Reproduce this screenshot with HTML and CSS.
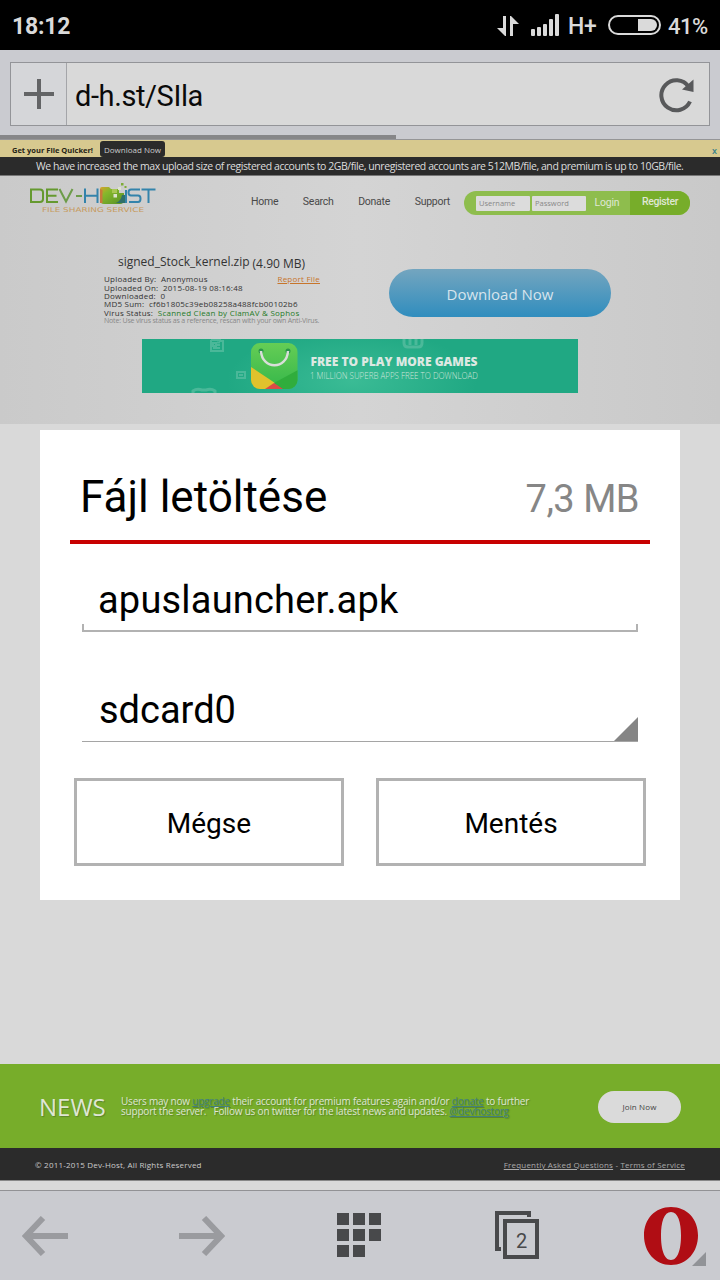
FILE: index.html
```html
<!DOCTYPE html>
<html lang="hu">
<head>
<meta charset="utf-8">
<title>d-h.st/SIla</title>
<link rel="stylesheet" href="styles.css">
</head>
<body>
<div class="phone">
  <header class="status">
    <span class="clock">18:12</span>
    <div class="status-right">
      <svg class="ic-data" width="22" height="22" viewBox="0 0 22 22"><path d="M6 1h3v20H8L0 13h6zM13 21h3V9h6L14 1h-1z" fill="#dadada"/></svg>
      <svg class="ic-signal" width="28" height="22" viewBox="0 0 28 22" fill="#dadada"><rect y="15" width="4" height="7" rx="1"/><rect x="6" y="13" width="4" height="9" rx="1"/><rect x="12" y="10" width="4" height="12" rx="1"/><rect x="18" y="5" width="4" height="17" rx="1"/><rect x="24" y="0" width="4" height="22" rx="1"/></svg>
      <span class="net">H+</span>
      <svg class="ic-battery" width="54" height="20" viewBox="0 0 54 20"><rect x="1" y="1" width="51" height="18" rx="9" fill="none" stroke="#dadada" stroke-width="2"/><path d="M30 4h13a6 6 0 0 1 0 12H30z" fill="#dadada"/></svg>
      <span class="pct">41%</span>
    </div>
  </header>

  <div class="address">
    <div class="urlbox">
      <div class="plus"><svg width="30" height="30" viewBox="0 0 30 30"><path d="M13 0h4v13h13v4H17v13h-4V17H0v-4h13z" fill="#636466"/></svg></div>
      <span class="url">d-h.st/SIla</span>
      <svg class="reload" width="36" height="36" viewBox="0 0 36 36"><path d="M31 24.500A15 15 0 1 1 29.500 9.500" fill="none" stroke="#58595b" stroke-width="4"/><path d="M34.500 2.500v12.500L23 12.500z" fill="#58595b"/></svg>
    </div>
  </div>
  <div class="progress"><div class="progress-bar"></div></div>

  <main class="site">
    <div class="promo"><b class="promo-text">Get your File Quicker!</b><span class="promo-btn">Download Now</span><span class="promo-x">x</span></div>
    <div class="notice"><span>We have increased the max upload size of registered accounts to 2GB/file, unregistered accounts are 512MB/file, and premium is up to 10GB/file.</span></div>
    <section class="hero">
      <div class="nav">
        <svg class="logo" width="130" height="36" viewBox="0 0 130 36">
          <defs>
            <linearGradient id="fold" x1="0" y1="0" x2="1" y2="1"><stop offset="0" stop-color="#d9a12a"/><stop offset=".3" stop-color="#86b82c"/><stop offset="1" stop-color="#568f26"/></linearGradient>
          </defs>
          <g fill="none" stroke-width="2">
            <path stroke="#65992f" d="M4 8.500h9q3 0 3 3v6.500q0 3-3 3H4zM31 8.500H20V21h11M20 14.800h9.500"/>
            <path stroke="#6d9c4a" d="M32.500 8l6.500 12.500L45.500 8M49 15h6"/>
            <path stroke="#3383ab" d="M58 7.500V22M70.500 7.500V22M58 14.800h12.500M99 9v13M113 8.500h-9q-2.500 0-2.500 3t2.500 3h7q2.500 0 2.500 3.200T111 21h-9M114.500 8.500H128.500M121.500 8.500V22"/>
          </g>
          <path d="M73 8q0-2 2-2h7l2 2h8v4h5v7q0 4-4 4H77q-4 0-4-4z" fill="url(#fold)"/>
          <path d="M73 8v14h2.500V9z" fill="#c77a3c"/><path d="M95 14h3v8h-9q5-2 6-8z" fill="#2f6f69"/>
          <path d="M85 8h5v4h-5z" fill="#a8c755"/><path d="M86.500 13h3.500v3.500h-3.500zM91 6h3v3h-3z" fill="#dde3cf"/><path d="M94 2h2.500v2.500H94zM97.500 5h2v2h-2z" fill="#7eac36"/>
          <text x="15" y="31" textLength="102" lengthAdjust="spacingAndGlyphs" class="tagline">FILE SHARING SERVICE</text>
        </svg>
        <nav class="links"><span>Home</span><span>Search</span><span>Donate</span><span>Support</span></nav>
        <div class="login"><span class="field">Username</span><span class="field">Password</span><span class="signin">Login</span><span class="register">Register</span></div>
      </div>
      <div class="file">
        <div class="details">
          <div class="filename"><span class="name">signed_Stock_kernel.zip</span><span class="size">(4.90 MB)</span></div>
          <div class="meta"><span>Uploaded By:&nbsp; Anonymous</span><u class="report">Report File</u></div>
          <div class="meta"><span>Uploaded On:&nbsp; 2015-08-19 08:16:48</span></div>
          <div class="meta short"><span>Downloaded:&nbsp; 0</span></div>
          <div class="meta short"><span>MD5 Sum:&nbsp; cf6b1805c39eb08258a488fcb00102b6</span></div>
          <div class="meta"><span>Virus Status:&nbsp; <span class="clean">Scanned Clean by ClamAV &amp; Sophos</span></span></div>
          <div class="note"><span>Note: Use virus status as a reference, rescan with your own Anti-Virus.</span></div>
        </div>
        <div class="download">Download Now</div>
      </div>
      <div class="banner">
        <svg class="banner-art" width="436" height="54" viewBox="0 0 436 54">
          <defs>
            <radialGradient id="glow"><stop offset="0" stop-color="#43c29b"/><stop offset="1" stop-color="#20a883"/></radialGradient>
            <linearGradient id="bag" x1="0" y1="0" x2="0" y2="1"><stop offset="0" stop-color="#65cd55"/><stop offset="1" stop-color="#35b74a"/></linearGradient>
            <clipPath id="app"><rect x="109" y="4" width="46.500" height="46" rx="9"/></clipPath>
          </defs>
          <rect width="436" height="54" fill="#20a883"/>
          <ellipse cx="210" cy="42" rx="125" ry="52" fill="url(#glow)" opacity=".75"/>
          <g fill="none" stroke="#5cbfa3" stroke-width="2" opacity=".7">
            <path d="M69 1v11h12V2h-3V1H69M71 9h7M75 6h3M75 3.500h3M71 4h3v3h-3zM95 33h8v6h-8zM97 36h4"/>
            <path d="M262 0v4q0 4 4 4h10q4 0 4-4V0M268 0v6M274 0v6" stroke-width="3"/><path d="M51 54v-2q4-3 9-1h4q5-2 9 1v2" stroke-width="3"/>
          </g>
          <g clip-path="url(#app)"><rect x="109" y="4" width="47" height="46" fill="url(#bag)"/><path d="M109 28l24 16-9 8h-15z" fill="#e0c22c"/><path d="M156 31l-24 13 8 8h16z" fill="#30ad3c"/><path d="M123 50l9-6 9 6z" fill="#dd4b46"/></g>
          <circle cx="119" cy="12" r="2.500" fill="#299748"/><circle cx="146" cy="12" r="2.500" fill="#299748"/>
          <path d="M119 12c1 19 26 19 27 0" fill="none" stroke="#d9ded9" stroke-width="2.500"/>
          <text class="ad-title" x="168.500" y="26.500" textLength="167" lengthAdjust="spacingAndGlyphs">FREE TO PLAY MORE GAMES</text>
          <text class="ad-sub" x="168" y="39.500" textLength="168" lengthAdjust="spacingAndGlyphs">1 MILLION SUPERB APPS FREE TO DOWNLOAD</text>
        </svg>
      </div>
    </section>

    <section class="dialog">
      <div class="dialog-head"><span class="title">Fájl letöltése</span><span class="filesize">7,3 MB</span></div>
      <div class="input"><span>apuslauncher.apk</span></div>
      <div class="select"><span>sdcard0</span><svg width="24" height="24" viewBox="0 0 24 24"><path d="M24 0v24H0z" fill="#858585"/></svg></div>
      <div class="actions"><div class="btn">Mégse</div><div class="btn">Mentés</div></div>
    </section>

    <section class="news">
      <span class="news-title">NEWS</span>
      <div class="news-copy"><div>Users may now <u>upgrade</u> their account for premium features again and/or <u>donate</u> to further</div><div>support the server. &nbsp; Follow us on twitter for the latest news and updates. <u>@devhostorg</u></div></div>
      <span class="join">Join Now</span>
    </section>
    <footer class="foot"><span class="copy">© 2011-2015 Dev-Host, All Rights Reserved</span><span class="legal"><u>Frequently Asked Questions</u> - <u>Terms of Service</u></span></footer>
    <div class="gap"></div>
  </main>

  <div class="toolbar">
    <svg class="t-back" width="46" height="40" viewBox="0 0 46 40"><path d="M46 20H4M21 2L4 20l17 18" fill="none" stroke="#9a9b9f" stroke-width="6"/></svg>
    <svg class="t-fwd" width="46" height="40" viewBox="0 0 46 40"><path d="M0 20h42M25 2l17 18-17 18" fill="none" stroke="#9a9b9f" stroke-width="6"/></svg>
    <svg class="t-grid" width="44" height="44" viewBox="0 0 44 44"><path d="M0 0h12v12H0zM16 0h12v12H16zM32 0h12v12H32zM0 16h12v12H0zM16 16h12v12H16zM32 16h12v12H32zM0 32h12v12H0zM16 32h12v12H16z" fill="#48494b"/></svg>
    <svg class="t-tabs" width="44" height="48" viewBox="0 0 44 48"><path d="M6 38H2V2h32v4M10 10h32v36H10z" fill="none" stroke="#48494b" stroke-width="4"/><text x="26.500" y="37" text-anchor="middle" class="tabcount">2</text></svg>
    <svg class="t-opera" width="62" height="60" viewBox="0 0 62 60"><path fill-rule="evenodd" d="M27 1C43 1 54 13 54 29.500S43 59 27 59 0 46 0 29.500 11 1 27 1zM27 6C20 6 17 16 17 29.500S20 54 27 54s10-11 10-24.500S34 6 27 6z" fill="#b00d14"/><path d="M62 46v14H48z" fill="#919397"/></svg>
  </div>
</div>
</body>
</html>
```
FILE: styles.css
```css
* { box-sizing: border-box; }
body { margin: 0; font-family: Roboto, sans-serif; }
svg { display: block; flex: none; }
.phone { width: 720px; height: 1280px; overflow: hidden; background: #d9d9d9; display: flex; flex-direction: column; }
.phone span, .phone u, .phone b { white-space: nowrap; }
.status { height: 50px; background: #000; color: #dadada; display: flex; justify-content: space-between; align-items: center; padding: 2px 12px 0; flex: none; }
.clock { font-size: 23px; font-weight: 700; letter-spacing: -0.2px; }
.status-right { display: flex; align-items: center; }
.ic-signal { margin: -3px 9px 0 12px; }
.net { font-size: 23px; font-weight: 500; width: 40px; letter-spacing: -0.4px; }
.ic-battery { margin-top: -2px; }
.pct { font-size: 22px; font-weight: 500; margin-left: 6px; width: 40px; letter-spacing: -0.5px; }
.address { height: 85px; background: #cacbd0; padding: 12px 10px 9px; flex: none; }
.urlbox { height: 64px; border: 1px solid #939498; background: #d9d9d9; display: flex; align-items: center; }
.plus { width: 56px; height: 62px; background: #d5d6d9; border-right: 1px solid #a4a5a9; display: flex; align-items: center; padding-left: 13px; }
.url { font-size: 29px; letter-spacing: -0.4px; color: #0a0a0a; margin-left: 8px; flex: 1; padding-top: 3px; }
.reload { margin: 1px 14px 0 0; }
.progress { height: 5px; background: #cacbd0; border-bottom: 1px solid #959597; flex: none; }
.progress-bar { width: 396px; height: 4px; background: #868688; }
.site { font-family: "Open Sans", sans-serif; display: flex; flex-direction: column; }
.promo { height: 17px; background: #d7c98f; display: flex; align-items: center; padding: 3px 0 0 12px; font-size: 7.500px; }
.promo-text { width: 88px; color: #262416; }
.promo-btn { height: 16px; width: 65px; background: #2b2b2b; border-radius: 3px; color: #ccc; text-align: center; line-height: 18px; font-size: 8px; margin-top: -2px; }
.promo-x { color: #38818a; margin-left: auto; margin-right: 3px; font-size: 9px; font-weight: 600; }
.notice { height: 19px; background: #2b2b2b; border-bottom: 1px solid #777; color: #ddd; font-size: 10.500px; line-height: 18px; padding-left: 36px; letter-spacing: -0.43px; }
.hero { height: 248px; background: linear-gradient(90deg, #cacaca, #d4d4d4 50%, #c9c9c9); }
.nav { height: 70px; display: flex; padding: 5px 30px 0 27px; }
.links { display: flex; width: 199px; margin-left: 94px; justify-content: space-between; font: 10.500px/42px Roboto, sans-serif; letter-spacing: -0.25px; color: #494949; }
.tagline { font: 6.500px "DejaVu Sans", sans-serif; fill: #c79b5d; }
.login { width: 226px; height: 24px; margin: 10px 0 0 auto; border-radius: 12px; background: #8ebd4d; overflow: hidden; display: flex; align-items: center; padding-left: 12px; }
.field { width: 54px; height: 15px; background: #dcdcdc; margin-right: 2px; padding-left: 3px; font-size: 7.500px; line-height: 15px; color: #888; border-radius: 1px; }
.signin { width: 42px; text-align: center; font: 10.500px/22px Roboto, sans-serif; letter-spacing: -0.2px; color: #dfe7d3; padding-right: 4px; }
.register { flex: 1; height: 24px; background: #77ad2a; text-align: center; font: 500 10.500px/22px Roboto, sans-serif; letter-spacing: -0.4px; color: #dfe7d3; }
.file { display: flex; height: 93px; padding: 7px 109px 0 104px; justify-content: space-between; align-items: flex-start; }
.details { width: 220px; color: #333; font-size: 8px; }
.filename { font-size: 12px; line-height: 18px; height: 21px; padding-left: 14px; display: flex; }
.size { padding-top: 2px; margin-left: 3px; }
.meta { height: 9px; line-height: 9px; display: flex; justify-content: space-between; letter-spacing: 0.23px; }
.meta.short { height: 8px; line-height: 8px; }
.report { color: #c7752b; margin-right: 4px; }
.clean { color: #257b27; }
.note { font-size: 7px; line-height: 7px; color: #888; letter-spacing: -0.18px; }
.download { width: 222px; height: 48px; margin-top: 16px; border-radius: 24px; background: linear-gradient(#74a5bf, #308dbe); color: #d7e4ed; font-size: 15px; line-height: 51px; text-align: center; }
.banner { width: 436px; height: 54px; margin-left: 142px; }
.ad-title { font: 800 12px "Open Sans", sans-serif; fill: #dde8e2; }
.ad-sub { font: 300 8.500px "Open Sans", sans-serif; fill: #cfe5da; }
.dialog { width: 640px; height: 470px; background: #fff; margin: 6px 0 0 40px; padding: 0 30px; color: #000; font-family: Roboto, sans-serif; }
.dialog-head { height: 114px; border-bottom: 4px solid #c80000; display: flex; justify-content: space-between; align-items: baseline; padding: 41px 11px 0 10px; }
.title { font-size: 44px; }
.filesize { font-size: 38px; letter-spacing: -0.5px; color: #868686; }
.input { height: 88px; margin: 0 12px; padding: 34px 16px 0; font-size: 38px; letter-spacing: 0.2px; border-bottom: 2px solid #b2b2b2; background: linear-gradient(#b2b2b2, #b2b2b2) left bottom/2px 6px no-repeat, linear-gradient(#b2b2b2, #b2b2b2) right bottom/2px 6px no-repeat; }
.select { height: 110px; margin: 0 12px; border-bottom: 1px solid #a5a5a5; padding: 56px 0 0 17px; font-size: 38px; display: flex; justify-content: space-between; align-items: flex-end; }
.select span { align-self: flex-start; }
.actions { display: flex; justify-content: space-between; padding: 36px 4px 0; }
.btn { width: 270px; height: 88px; border: 3px solid #b2b2b2; text-align: center; font-size: 28px; line-height: 85px; }
.news { height: 84px; margin-top: 164px; background: #77ad2a; color: #dfe6d4; display: flex; align-items: center; padding: 2px 39px; text-shadow: 1px 1px 1px #5c852a; }
.news-title { font-size: 24px; width: 82px; }
.news-copy { font-size: 10px; line-height: 10px; flex: 1; letter-spacing: -0.2px; }
.news-copy u { color: #42817d; }
.join { width: 83px; height: 32px; border-radius: 16px; background: #dadada; color: #444; font-size: 8px; line-height: 32px; text-align: center; text-shadow: none; margin-top: 1px; letter-spacing: 0.15px; }
.foot { height: 33px; background: #2b2b2b; border-bottom: 1px solid #888; display: flex; justify-content: space-between; align-items: center; padding: 0 35px; color: #ccc; font-size: 8px; letter-spacing: 0.19px; }
.legal { color: #aaa; }
.gap { height: 9px; }
.toolbar { height: 90px; background: #cacbd0; border-top: 1px solid #929295; display: flex; padding: 0 14px 0 22px; flex: none; align-items: flex-start; }
.t-back { margin-top: 25px; }
.t-fwd { margin: 25px 0 0 111px; }
.t-grid { margin: 22px 0 0 112px; }
.t-tabs { margin: 20px 0 0 114px; }
.t-opera { margin: 15px 0 0 105px; }
.tabcount { font: 20px Roboto, sans-serif; fill: #48494b; }
```
